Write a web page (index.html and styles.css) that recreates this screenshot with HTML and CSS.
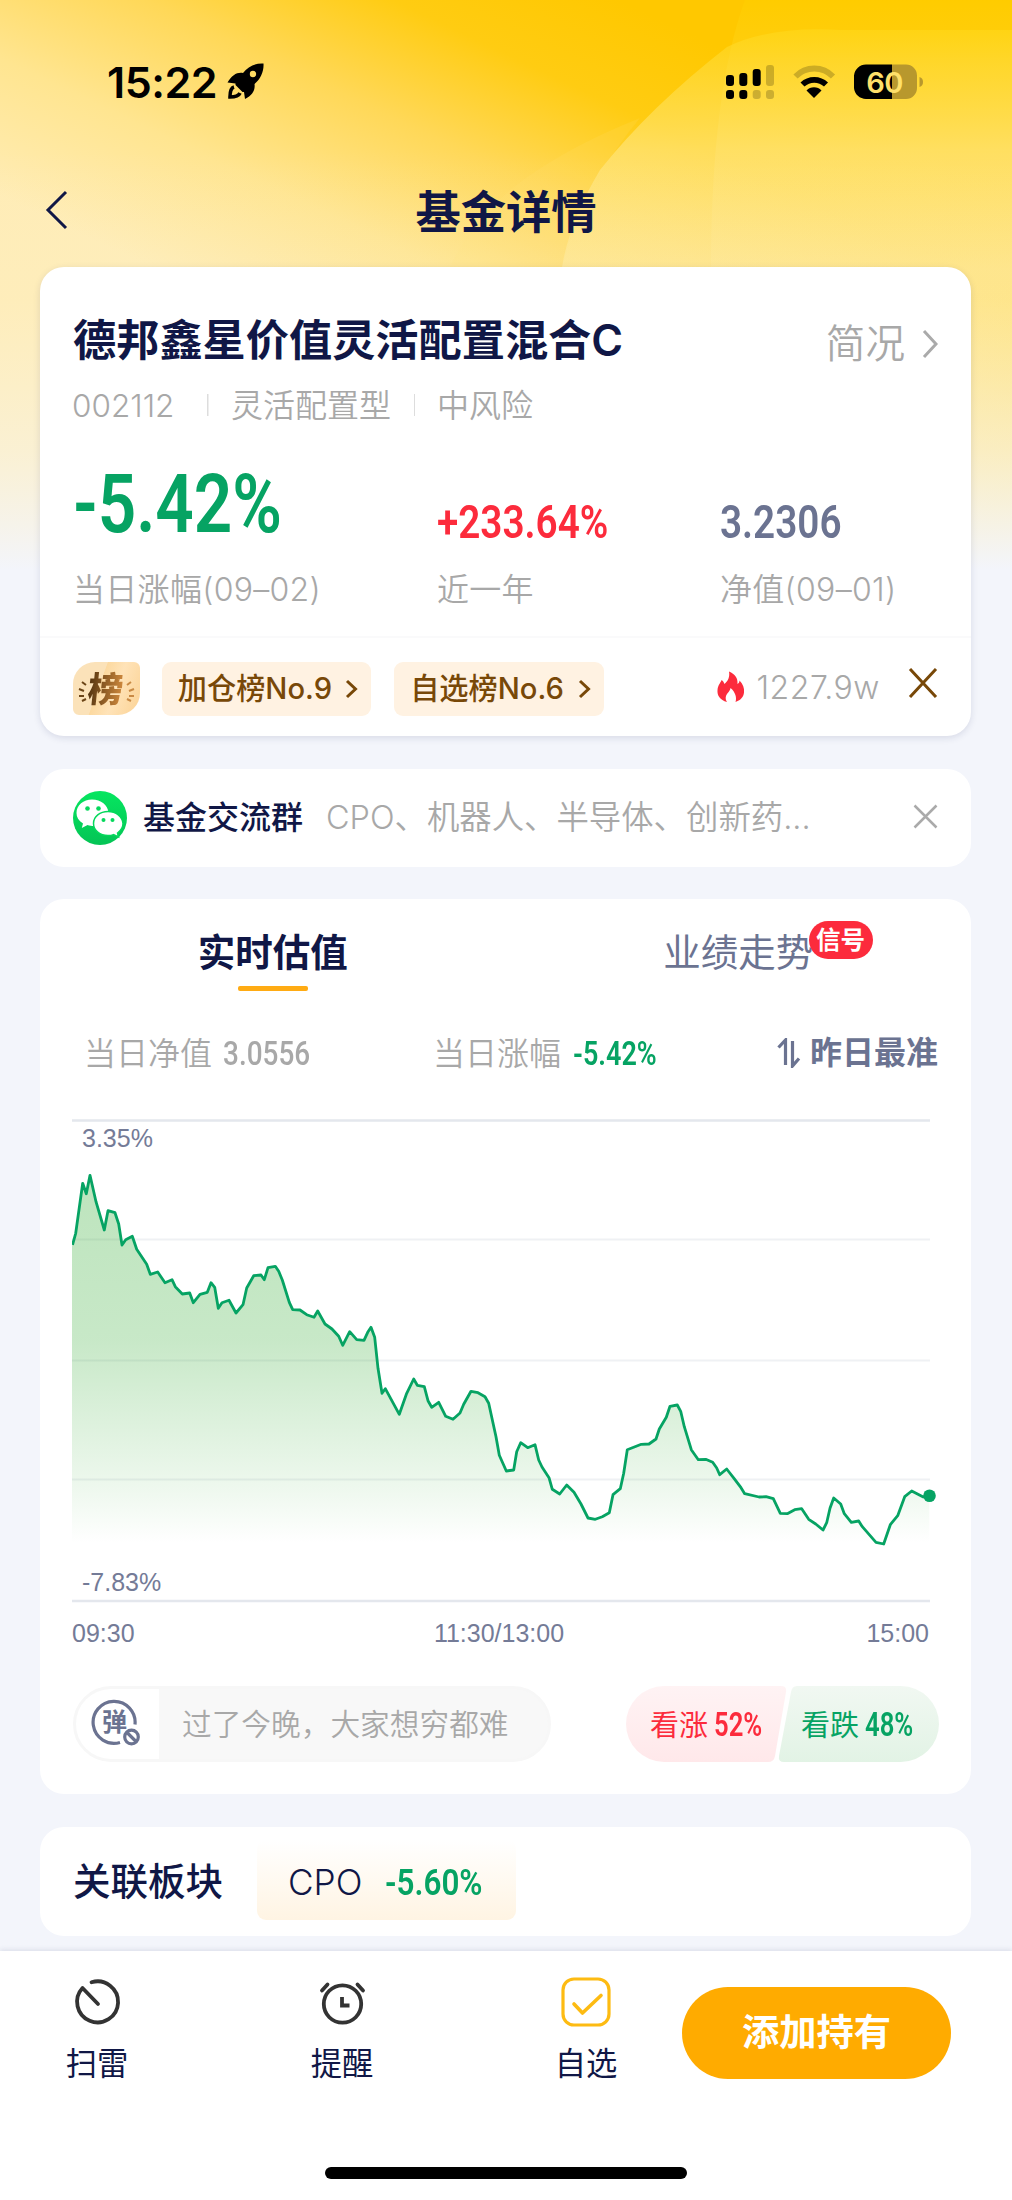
FILE: index.html
```html
<!DOCTYPE html>
<html lang="zh-CN">
<head>
<meta charset="utf-8">
<title>基金详情</title>
<link rel="stylesheet" href="styles.css">
</head>
<body>
<svg class="backdrop" viewBox="0 0 1012 600" preserveAspectRatio="none" aria-hidden="true">
  <defs>
    <linearGradient id="bg-base" gradientUnits="userSpaceOnUse" x1="620" y1="0" x2="430" y2="400">
      <stop offset="0" stop-color="#ffc800"/>
      <stop offset=".22" stop-color="#ffcc12"/>
      <stop offset=".46" stop-color="#ffd858"/>
      <stop offset=".72" stop-color="#ffe590"/>
      <stop offset="1" stop-color="#ffecb4"/>
    </linearGradient>
    <linearGradient id="bg-fade" x1="0" y1="0" x2="0" y2="1">
      <stop offset=".25" stop-color="#f3f5fb" stop-opacity="0"/>
      <stop offset=".5" stop-color="#f9f3e0" stop-opacity=".15"/>
      <stop offset=".75" stop-color="#f7f3e6" stop-opacity=".62"/>
      <stop offset=".95" stop-color="#f3f5fb"/>
    </linearGradient>
    <linearGradient id="bg-arc" gradientUnits="userSpaceOnUse" x1="0" y1="0" x2="0" y2="600">
      <stop offset="0" stop-color="#ffd600" stop-opacity=".55"/>
      <stop offset=".1" stop-color="#ffdc38" stop-opacity=".6"/>
      <stop offset=".25" stop-color="#ffe475" stop-opacity=".72"/>
      <stop offset=".45" stop-color="#ffe896" stop-opacity=".75"/>
      <stop offset="1" stop-color="#ffe890" stop-opacity=".3"/>
    </linearGradient>
  </defs>
  <rect width="1012" height="600" fill="url(#bg-base)"/>
  <path d="M745 0 Q712 90 711 260 L711 600 L1012 600 L1012 0Z" fill="url(#bg-arc)" opacity=".5"/>
  <path d="M1012 30 H840 Q770 26 727 47 Q650 107 600 170 Q570 220 562 267 L540 600 H1012Z" fill="url(#bg-arc)"/>
  <path d="M640 118 Q560 150 510 190 Q470 225 450 267 L400 600 H562 V267 Q580 190 640 118Z" fill="#ffe27a" opacity=".14"/>
  <rect width="1012" height="600" fill="url(#bg-fade)"/>
</svg>

<header class="status">
  <div class="status-left">
    <span class="clock">15:22</span>
    <svg width="38" height="38" viewBox="0 0 38 38"><path d="M36.500 1.500C29 1 21 4 16 11C10 10 5 13 .5 20.500L8.500 21.500L8.500 23L15.500 30L17 30L18 37C25 34 28.500 28 27.500 22C34 17 37 9 36.500 1.500Z"/><circle cx="26" cy="12" r="3.200" fill="#ffdc63"/><path d="M7 25C3.500 26 3 31 3 35C7 35 11.500 34.500 13 31" fill="none" stroke="#000" stroke-width="3.600"/></svg>
  </div>
  <svg class="status-right" width="200" height="40" viewBox="0 0 200 40">
    <g>
      <rect x="2" y="13" width="8" height="11" rx="3"/><rect x="15.300" y="11" width="8" height="13" rx="3"/><rect x="28.700" y="7" width="8" height="17" rx="3"/>
      <rect x="42" y="3" width="8" height="21" rx="3" opacity=".2"/>
      <rect x="2" y="28" width="8" height="9" rx="3"/><rect x="15.300" y="28" width="8" height="9" rx="3"/>
      <rect x="28.700" y="28" width="8" height="9" rx="3" opacity=".2"/><rect x="42" y="28" width="8" height="9" rx="3" opacity=".2"/>
    </g>
    <g fill="none" stroke="#000" stroke-width="5.800">
      <path d="M71.500 14.500A26 26 0 0 1 109 14.500" opacity=".2"/>
      <path d="M78.500 22.500A17 17 0 0 1 102 22.500"/>
    </g>
    <path d="M82.500 28.500A10.500 10.500 0 0 1 97.500 28.500L90 36Z"/>
    <path d="M140 2.500H182A11 11 0 0 1 193 13.500V26A11 11 0 0 1 182 37H168V2.500Z" fill="#b8982d"/>
    <path d="M142 2.500H168V37H142A12 12 0 0 1 130 26V13.500A12 12 0 0 1 142 2.500Z"/>
    <path d="M195.500 15Q199 16 199 20T195.500 25Z" fill="#b8982d"/>
    <text class="batt" x="160.500" y="30.500" text-anchor="middle">60</text>
  </svg>
</header>

<nav class="topbar">
  <svg class="back" width="26" height="40" viewBox="0 0 26 40"><path d="M22 2L4 20L22 38"/></svg>
  <h1>基金详情</h1>
</nav>

<main>
  <section class="card fund">
    <div class="fund-head">
      <h2>德邦鑫星价值灵活配置混合C</h2>
      <a class="brief">简况<svg width="16" height="30" viewBox="0 0 16 30"><path d="M2 2L14 15L2 28"/></svg></a>
    </div>
    <div class="tags"><span class="code">002112</span><span class="type">灵活配置型</span><span>中风险</span></div>
    <div class="stats">
      <div><b class="din big green">-5.42%</b><p>当日涨幅(09–02)</p></div>
      <div><b class="din mid red">+233.64%</b><p>近一年</p></div>
      <div><b class="din mid slate">3.2306</b><p>净值(09–01)</p></div>
    </div>
    <div class="ranks">
      <div class="rank-logo">
        <svg width="67" height="53" viewBox="0 0 67 53"><g fill="none" stroke-width="2" stroke="#6b4416"><path d="M9 20l4 3M6 27l5 2M6 34l5 0M9 39l4-2"/><path d="M58 20l-4 3M61 27l-5 2M61 34l-5 0M58 39l-4-2" stroke="#c98a45"/></g></svg>
        <span>榜</span>
      </div>
      <a class="pill">加仓榜No.9<svg width="13" height="20" viewBox="0 0 13 20"><path d="M2 2L10.500 10L2 18"/></svg></a>
      <a class="pill">自选榜No.6<svg width="13" height="20" viewBox="0 0 13 20"><path d="M2 2L10.500 10L2 18"/></svg></a>
      <svg class="fire" width="28" height="32" viewBox="0 0 28 32"><path d="M10 31C3 29 0 24.500 .5 19C1 13.500 4 11.500 4.500 9C6 10 7 11.500 7.500 13C11 10 13 6 12 .5C18 3 21 7 20.500 13C22 12 22.500 11 22.500 9.500C26 13 27.500 17 27 21.500C26.500 26.500 23 29.500 18.500 31C20 27 18.500 21 13.500 17C13 20.500 10 22 9 25C8.200 27.500 9 29.500 10 31Z" fill="#fc2b3c"/></svg>
      <span class="heat">1227.9w</span>
      <svg class="close" width="30" height="30" viewBox="0 0 30 30"><path d="M2 1L28 29M28 1L2 29"/></svg>
    </div>
  </section>

  <section class="card group">
    <svg width="54" height="54" viewBox="0 0 54 54"><defs><linearGradient id="wx" x1="0" y1="0" x2="0" y2="1"><stop offset="0" stop-color="#06e660"/><stop offset="1" stop-color="#04c455"/></linearGradient></defs><circle cx="27" cy="27" r="27" fill="url(#wx)"/>
      <path d="M19 8.500C10.500 8.500 3.500 14 3.500 22C3.500 26 5.500 29.500 10 32.500L8.800 37L14.500 34C16.500 34.700 19 35 21 35C29 34.500 35.500 29 35.500 22C35 14 28 8.500 19 8.500Z" fill="#fff"/>
      <path d="M35 20.500C27 20.500 20.500 25.500 20.500 32.500C20.500 39.500 27 44.500 35 44.500C37 44.500 39 44.200 40.500 43.600L45.500 46L44.500 42C48 39.500 50 36.500 50 32.500C49.500 25.500 43 20.500 35 20.500Z" fill="#fff" stroke="#05d85b" stroke-width="1.500"/>
      <g fill="#05d85b"><circle cx="14.500" cy="17.500" r="2.300"/><circle cx="25.500" cy="17.500" r="2.300"/><circle cx="30.500" cy="29" r="2"/><circle cx="39.500" cy="29" r="2"/></g></svg>
    <strong>基金交流群</strong>
    <span>CPO、机器人、半导体、创新药...</span>
    <svg class="close-sm" width="25" height="25" viewBox="0 0 25 25"><path d="M1.500 1.500L23.500 23.500M23.500 1.500L1.500 23.500"/></svg>
  </section>

  <section class="card chart-card">
    <div class="tabs">
      <a class="active">实时估值</a>
      <a>业绩走势<i class="signal">信号</i></a>
    </div>
    <div class="today">
      <span class="nav">当日净值<b class="din sm">3.0556</b></span>
      <span class="chg">当日涨幅<b class="din sm green">-5.42%</b></span>
      <span class="best"><svg width="24" height="30" viewBox="0 0 24 30"><path d="M1.500 9.500L8.500 2V27M15.500 3V28L22 20.500"/></svg>昨日最准</span>
    </div>
    <svg class="chart" width="866" height="536" viewBox="0 0 866 536">
      <defs><linearGradient id="area" gradientUnits="userSpaceOnUse" x1="0" y1="56" x2="0" y2="424"><stop offset="0" stop-color="#2aa82a" stop-opacity=".31"/><stop offset=".45" stop-color="#2aa82a" stop-opacity=".26"/><stop offset=".65" stop-color="#2aa82a" stop-opacity=".17"/><stop offset=".85" stop-color="#2aa82a" stop-opacity=".08"/><stop offset="1" stop-color="#2aa82a" stop-opacity="0"/></linearGradient></defs>
      <g fill="none" stroke="#e4e7ed" stroke-width="2.600"><path d="M0 1.500H858M0 482H858"/><path d="M0 120.500H858M0 241.500H858M0 360.500H858" stroke="#eff1f4" stroke-width="2"/></g>
      <path fill="url(#area)" d="M0 126L3.700 114.300L10.700 64.300L14.300 74.700L18 56.300L24 82.700L32.300 111L36 91.700L43 93.700L46.700 105L50 126L53.700 120.700L60.300 117.300L64.700 130.300L74.700 145.300L78.300 155.300L85.700 153L93 163.700L100 160.700L103.300 167.700L110.300 175L117.700 174L121.300 183.700L128 175.300L135.300 173.300L139 163.700L142.700 168.300L146.300 189.300L150 183.700L157 181.300L164 194L171 185.700L174.700 169L181.700 156.700L189 156L192.300 160.700L196 148.700L203.300 147.300L206.700 152.300L210.300 161L217.300 183.300L220.700 190.700L228 191L234.700 195.700L242 198.300L245.700 192L253 205L260 210L266.700 217.300L270.700 226.300L277.700 212.700L284.700 220.700L292 221.300L295.700 213.300L299 208.300L302.700 218.300L306 249.300L310 274.300L313.300 269.700L327.300 295.300L334.700 274.300L341.700 260L345.300 266.300L352.300 267.700L356 281.700L359.700 288.300L366.700 283.300L373.700 297.300L381 300.300L388 294L391.700 285.300L399 272.300L406 273.700L413 277.700L416.700 284.300L424 317.700L427.300 336.300L434.300 352L441.700 351L444.700 332.700L448.700 323.700L455.700 328.700L463 325.700L466.700 341L470 348L477 358.700L480.300 370.300L487.700 375L494.700 366L502 373.300L509 385L516 399L523.300 400.300L530.300 397.700L537.300 393.700L541 375.700L548.300 369.700L551.700 354.300L555.300 330.700L569.300 325.300L577 325L584 320L587.300 310L594.300 298.300L598 287.300L605.300 286L608.700 292.300L612.300 307.700L619.300 330.700L626.300 340.700L633.700 340.300L640.700 343.300L644.700 349L647.700 355.700L654.700 350L662 359.300L669 368.700L672.700 374.700L687 378L694 377.700L701.300 379.700L708.300 394.300L715.300 394.700L722.700 390.700L729.700 389.700L736.700 400.300L743.700 405L751 411L754.700 403.700L758 389.300L761.700 379L768.700 385L772.300 394.700L779.300 403.300L786.700 402L790.300 407.700L804 423.300L811.700 425L818.300 405.700L825.700 396.700L832.700 377.700L839.700 372L851.300 378L857.300 376.700V425H0Z"/>
      <path fill="none" stroke="#06a363" stroke-width="2.800" stroke-linejoin="round" d="M.5 126L3.700 114.300L10.700 64.300L14.300 74.700L18 56.300L24 82.700L32.300 111L36 91.700L43 93.700L46.700 105L50 126L53.700 120.700L60.300 117.300L64.700 130.300L74.700 145.300L78.300 155.300L85.700 153L93 163.700L100 160.700L103.300 167.700L110.300 175L117.700 174L121.300 183.700L128 175.300L135.300 173.300L139 163.700L142.700 168.300L146.300 189.300L150 183.700L157 181.300L164 194L171 185.700L174.700 169L181.700 156.700L189 156L192.300 160.700L196 148.700L203.300 147.300L206.700 152.300L210.300 161L217.300 183.300L220.700 190.700L228 191L234.700 195.700L242 198.300L245.700 192L253 205L260 210L266.700 217.300L270.700 226.300L277.700 212.700L284.700 220.700L292 221.300L295.700 213.300L299 208.300L302.700 218.300L306 249.300L310 274.300L313.300 269.700L327.300 295.300L334.700 274.300L341.700 260L345.300 266.300L352.300 267.700L356 281.700L359.700 288.300L366.700 283.300L373.700 297.300L381 300.300L388 294L391.700 285.300L399 272.300L406 273.700L413 277.700L416.700 284.300L424 317.700L427.300 336.300L434.300 352L441.700 351L444.700 332.700L448.700 323.700L455.700 328.700L463 325.700L466.700 341L470 348L477 358.700L480.300 370.300L487.700 375L494.700 366L502 373.300L509 385L516 399L523.300 400.300L530.300 397.700L537.300 393.700L541 375.700L548.300 369.700L551.700 354.300L555.300 330.700L569.300 325.300L577 325L584 320L587.300 310L594.300 298.300L598 287.300L605.300 286L608.700 292.300L612.300 307.700L619.300 330.700L626.300 340.700L633.700 340.300L640.700 343.300L644.700 349L647.700 355.700L654.700 350L662 359.300L669 368.700L672.700 374.700L687 378L694 377.700L701.300 379.700L708.300 394.300L715.300 394.700L722.700 390.700L729.700 389.700L736.700 400.300L743.700 405L751 411L754.700 403.700L758 389.300L761.700 379L768.700 385L772.300 394.700L779.300 403.300L786.700 402L790.300 407.700L804 423.300L811.700 425L818.300 405.700L825.700 396.700L832.700 377.700L839.700 372L851.300 378L857.300 376.700"/>
      <circle cx="857.500" cy="376.700" r="6.300" fill="#06a363"/>
      <g class="axis"><text x="10" y="27.500">3.35%</text><text x="10" y="472">-7.83%</text><text x="0" y="523">09:30</text><text x="427" y="523" text-anchor="middle">11:30/13:00</text><text x="857" y="523" text-anchor="end">15:00</text></g>
    </svg>
    <div class="talk">
      <div class="danmu">
        <div class="danmu-icon"><svg width="50" height="50" viewBox="0 0 50 50"><g fill="none" stroke="#6b7391" stroke-width="3.200"><path d="M44 25.500A21 21 0 1 0 29 43.500"/><circle cx="40.500" cy="38" r="6.800"/><path d="M36 33.500L45 42.500"/></g><text x="23.500" y="31.500" text-anchor="middle">弹</text></svg></div>
        <span>过了今晚，大家想穷都难</span>
      </div>
      <div class="vote">
        <svg width="313" height="76" viewBox="0 0 313 76" aria-hidden="true"><defs><linearGradient id="up" x1="0" y1="0" x2="0" y2="1"><stop offset="0" stop-color="#fff3f4"/><stop offset="1" stop-color="#ffe8ea"/></linearGradient><linearGradient id="down" x1="0" y1="0" x2="0" y2="1"><stop offset="0" stop-color="#f1f8f2"/><stop offset="1" stop-color="#e2f3e5"/></linearGradient></defs>
          <path d="M38 0H155Q161 0 160 6L149 70Q148 76 142 76H38A38 38 0 0 1 38 0Z" fill="url(#up)"/><path d="M171 0H275A38 38 0 0 1 275 76H158Q152 76 153 70L165 6Q166 0 171 0Z" fill="url(#down)"/></svg>
        <span class="bull red">看涨<b class="din sm">52%</b></span><span class="bear green">看跌<b class="din sm">48%</b></span>
      </div>
    </div>
  </section>

  <section class="card related">
    <h3>关联板块</h3>
    <a class="chip">CPO<b class="din chipnum green">-5.60%</b></a>
  </section>
</main>

<footer>
  <div class="actions">
    <a><svg width="52" height="52" viewBox="0 0 52 52"><g fill="none" stroke="#333" stroke-width="3.800"><path d="M20.500 6.300A20.500 20.500 0 1 1 11.500 12L27 28" stroke-linejoin="round" stroke-linecap="round"/></g></svg>扫雷</a>
    <a><svg width="52" height="52" viewBox="0 0 52 52"><g fill="none" stroke="#333" stroke-width="3.800" stroke-linecap="round"><circle cx="26.500" cy="28" r="18.700"/><path d="M26 21V29.500H33.500" stroke-linecap="butt"/><path d="M6 14.500L11.500 8.500M41.500 8.500L47 14.500"/></g></svg>提醒</a>
    <a><svg width="52" height="52" viewBox="0 0 52 52"><g fill="none" stroke="#fdbb12" stroke-width="3.200"><rect x="3" y="3" width="46" height="46" rx="11"/><path d="M14 28L22.500 37L41 19.500" stroke-width="3.600" stroke-linecap="round" stroke-linejoin="round"/></g></svg>自选</a>
    <button>添加持有</button>
  </div>
  <div class="home"></div>
</footer>
</body>
</html>
```

FILE: styles.css
```css
* { box-sizing: border-box; margin: 0; padding: 0; }
body {
  position: relative; width: 1012px; height: 2200px; overflow: hidden;
  display: flex; flex-direction: column;
  background: #f3f5fb; color: #101746;
  font-family: Inter, "Noto Sans CJK SC", sans-serif;
}
svg { display: block; flex: none; }
h1, h2, h3, b, strong, i { font-style: normal; }
.green { color: #06a363; }
.red { color: #fc2b3c; }
.slate { color: #6b7391; }

.backdrop { position: absolute; left: 0; top: 0; width: 1012px; height: 600px; z-index: -1; }

.status { height: 150px; padding: 62px 88px 0 107px; display: flex; justify-content: space-between; }
.status-left { display: flex; gap: 7px; height: 40px; color: #000; }
.clock { width: 113px; font-size: 43px; line-height: 41px; font-weight: 600; letter-spacing: -.500px; white-space: nowrap; }
.batt { font: 600 29px Inter, sans-serif; letter-spacing: -.500px; fill: #ffe06a; }

.topbar { height: 117px; position: relative; }
.back { position: absolute; left: 44px; top: 40px; fill: none; stroke: #101746; stroke-width: 3; }
.topbar h1 { text-align: center; font-size: 45.300px; line-height: 126px; font-weight: 600; }

main { padding: 0 41px 0 40px; display: flex; flex-direction: column; }
.card { background: #fff; border-radius: 24px; width: 931px; }

.fund { height: 469px; box-shadow: 0 2px 7px rgba(30, 40, 90, .13); display: flex; flex-direction: column; }
.fund-head { height: 112px; padding: 36px 33px 0 33px; display: flex; justify-content: space-between; }
.fund-head h2 { font-size: 43.200px; line-height: 74px; font-weight: 600; white-space: nowrap; }
.brief { display: flex; align-items: center; gap: 17px; height: 82px; font-size: 39.600px; line-height: 83px; color: #a8a8a8; font-weight: 350; }
.brief svg { fill: none; stroke: #aaa; stroke-width: 3; }
.tags { padding-left: 32px; height: 52px; display: flex; align-items: center; font-size: 32px; line-height: 53px; color: #a8a8a8; font-weight: 350; }
.tags span { white-space: nowrap; }
.tags .code { width: 135px; font-size: 31.500px; font-weight: 300; }
.tags .type { width: 208px; padding-left: 24px; margin-right: 22px; background: linear-gradient(#ddd, #ddd) 0 50% / 1.500px 22px no-repeat, linear-gradient(#ddd, #ddd) 100% 50% / 1.500px 22px no-repeat; }
.stats { height: 205px; padding: 20px 0 0 33px; display: grid; grid-template-columns: 364px 283px 1fr; }
.stats > div { height: 150px; display: flex; flex-direction: column; justify-content: flex-end; }
.stats p { font-size: 32px; line-height: 42px; margin-bottom: -10px; color: #a8a8a8; font-weight: 350; white-space: nowrap; letter-spacing: .300px; }
.din { display: inline-block; font-family: Roboto, sans-serif; font-weight: 600; transform-origin: left center; white-space: nowrap; }
.big { font-size: 81px; line-height: 84px; transform: scaleX(.832); margin-bottom: 22px; }
.mid { font-size: 46.500px; line-height: 50px; transform: scaleX(.832); margin-bottom: 22px; }

.ranks { height: 100px; padding: 24px 33px 0; border-top: 2px solid #fafafb; display: flex; }
.rank-logo { position: relative; width: 67px; height: 53px; background: linear-gradient(110deg, #fbe2b9 40%, #fcd9a0 41%, #ffe3b8 62%, #fbd294); border-radius: 22px 6px 22px 6px; margin-right: 22px; }
.rank-logo svg { position: absolute; left: 0; top: 0; }
.rank-logo span { position: absolute; left: 15px; top: 0; font-size: 35px; line-height: 54px; font-weight: 900; transform: skewX(-6deg); background: linear-gradient(90deg, #54340f, #d08a3e); -webkit-background-clip: text; color: transparent; }
.pill { width: 210px; height: 54px; margin-right: 23px; padding-left: 16px; display: flex; align-items: center; background: #fff2e2; border-radius: 9px; color: #784808; font-size: 29.200px; line-height: 52px; font-weight: 450; white-space: nowrap; }
.pill svg { margin-left: auto; margin-right: 13px; fill: none; stroke: #784808; stroke-width: 3; }
.fire { margin: 9px 12px 0 90px; }
.heat { width: 152px; font-size: 32px; line-height: 52px; color: #a8a8a8; font-weight: 350; letter-spacing: .500px; }
.close { margin-top: 6px; fill: none; stroke: #784808; stroke-width: 3; }

.group { margin-top: 33px; height: 98px; padding: 0 33px 0 33px; display: flex; align-items: center; font-size: 32.400px; line-height: 50px; white-space: nowrap; }
.group strong { margin-left: 16px; font-size: 32px; font-weight: 450; width: 183px; }
.group span { color: #a8a8a8; font-weight: 350; }
.close-sm { margin-left: auto; margin-top: -3px; fill: none; stroke: #aaa; stroke-width: 2.500; }

.chart-card { margin-top: 32px; height: 895px; padding-top: 20px; }
.tabs { display: flex; height: 92px; }
.tabs a { position: relative; width: 465.500px; text-align: center; font-size: 37.500px; line-height: 68px; color: #6b7391; }
.tabs .active { color: #101746; font-weight: 600; }
.tabs .active::after { content: ""; position: absolute; left: 198px; top: 67px; width: 70px; height: 5px; border-radius: 2px; background: #ffab13; }
.signal { position: absolute; left: 303px; top: 2px; width: 64px; height: 38px; border-radius: 19px; background: #fc2b3c; color: #fff; font-size: 24.500px; line-height: 39px; font-weight: 600; }
.today { height: 84px; padding: 0 33px 0 44px; display: flex; font-size: 32px; line-height: 86px; color: #a8a8a8; font-weight: 350; white-space: nowrap; }
.today .nav { width: 349px; }
.today .best { margin-left: auto; display: flex; align-items: center; gap: 9px; color: #6b7391; font-weight: 600; }
.best svg { fill: none; stroke: #6b7391; stroke-width: 3.200; }
.sm { font-size: 32.500px; transform: scaleX(.83); margin-left: 12px; }
.today .nav .sm { font-weight: 500; transform: scaleX(.86); margin-left: 11px; }
.chart { margin: 24px 0 0 32px; }
.axis { font: 25px "Liberation Sans", sans-serif; fill: #747b97; }
.talk { height: 76px; margin: 31px 32px 0 33px; display: flex; justify-content: space-between; }
.danmu { width: 478px; height: 76px; border: 3px solid #f7f7f7; border-radius: 38px; overflow: hidden; background: #f8f8f8; display: flex; color: #a8a8a8; font-size: 29.700px; line-height: 71px; font-weight: 350; white-space: nowrap; }
.danmu-icon { width: 83px; background: #fff; padding: 10px 0 0 15px; margin-right: 23px; }
.danmu-icon text { font: 600 25px "Noto Sans CJK SC", sans-serif; fill: #6b7391; }
.vote { position: relative; width: 313px; height: 76px; padding-left: 24px; display: flex; font-size: 29px; line-height: 78px; white-space: nowrap; }
.vote svg { position: absolute; left: 0; top: 0; }
.vote span { position: relative; flex: none; width: 151px; }
.vote .bear { width: 138px; }
.vote .sm { margin-left: 6px; transform: scaleX(.79); }

.related { margin-top: 33px; height: 109px; padding-left: 33px; display: flex; align-items: center; }
.related h3 { width: 184px; font-size: 37.500px; line-height: 60px; font-weight: 500; white-space: nowrap; }
.chip { width: 259px; height: 80px; margin-top: -3px; padding-left: 31px; border-radius: 9px; background: linear-gradient(#fff, #fff4e3); font-size: 35.200px; line-height: 84px; font-weight: 350; white-space: nowrap; }
.chipnum { font-size: 37px; transform: scaleX(.85); margin-left: 23px; }

footer { margin-top: 15px; height: 249px; background: #fff; box-shadow: 0 -1px 5px rgba(30, 40, 90, .12); position: relative; }
.actions { display: flex; padding-left: 62px; height: 216px; }
.actions a { width: 70px; margin-right: 175px; padding-top: 25px; display: flex; flex-direction: column; align-items: center; font-size: 31.300px; line-height: 72px; white-space: nowrap; }
.actions a:nth-of-type(3) { margin-right: 61px; margin-left: -1px; }
.actions button { margin-top: 36px; width: 269px; height: 92px; border: 0; border-radius: 46px; background: #ffab00; color: #fff; font: 600 37.300px/92px Inter, "Noto Sans CJK SC", sans-serif; }
.home { width: 362px; height: 12px; margin: 0 auto; border-radius: 6px; background: #000; }
```
